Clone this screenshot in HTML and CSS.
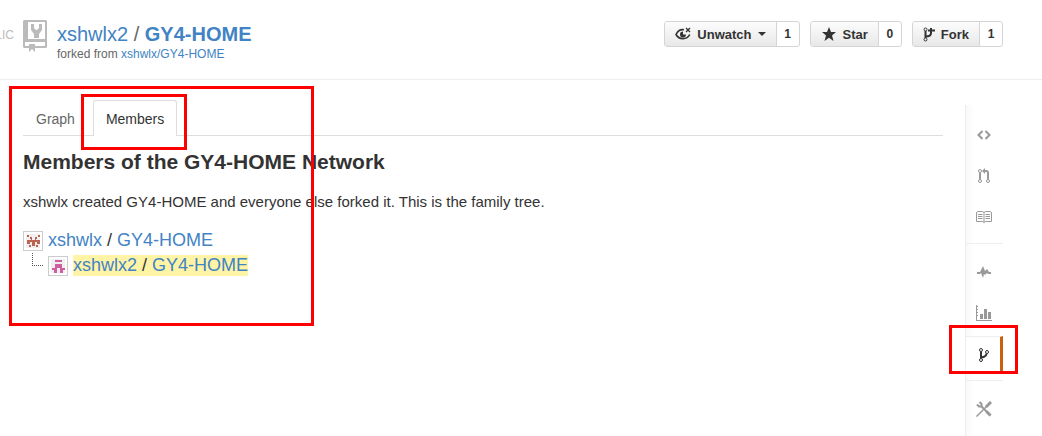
FILE: index.html
```html
<!DOCTYPE html>
<html lang="en">
<head>
    <meta charset="UTF-8">
    <meta name="viewport" content="width=device-width, initial-scale=1.0">
    <title>Members of the GY4-HOME Network</title>
    <link rel="stylesheet" href="styles.css">
</head>
<body>

<header class="repo-header">
    <div class="visibility"><span>PUBLIC</span></div>
    <svg class="repo-icon" width="24" height="32" viewBox="0 0 24 32">
        <path fill="#bbb" fill-rule="evenodd" d="M1 0H23L24 1V27L23 28H12V32L9 29L6 32V28H1L0 27V1ZM5 2V19H22V2ZM2 22V26H6V24H12V26H22V22Z"/>
        <path fill="#bbb" d="M8 4h3v4l2 2h1l2-2V4h3v6l-3 4v4h-5v-4l-3-4z"/>
    </svg>
    <div class="repo-title">
        <h1><a href="#">xshwlx2</a> / <a href="#"><strong>GY4-HOME</strong></a></h1>
        <p>forked from <a href="#">xshwlx/GY4-HOME</a></p>
    </div>
    <div class="actions">
        <div class="action">
            <button type="button">
                <svg width="16" height="14" viewBox="0 0 16 14" fill="none" stroke="#333">
                    <path stroke-width="1.6" d="M9 2.800C5 2 2.500 4.500 1 7.500C4 13 12 13 14.800 7.500"/>
                    <path stroke-width="1.300" d="M11 1l4 4M15 1l-4 4"/>
                    <path fill="#333" stroke="none" d="M8 4.500a3 3 0 1 0 3 3H8z"/>
                </svg>
                Unwatch
                <span class="caret"></span>
            </button>
            <a class="count" href="#">1</a>
        </div>
        <div class="action">
            <button type="button">
                <svg width="16" height="14" viewBox="0 0 16 14">
                    <path fill="#333" d="M8 0l2 5h5l-4 3.500L12.500 14L8 10.700L3.500 14L5 8.500L1 5h5z"/>
                </svg>
                Star
            </button>
            <a class="count" href="#">0</a>
        </div>
        <div class="action">
            <button type="button">
                <svg width="12" height="15" viewBox="0 0 12 15" fill="none" stroke="#333">
                    <circle cx="2.500" cy="2.500" r="1.500"/>
                    <circle cx="2.500" cy="12.500" r="1.500"/>
                    <path stroke-width="2" d="M2.500 4v7M2.500 9.500C6 9.500 8 9 8 6V1M5 3.500h7"/>
                </svg>
                Fork
            </button>
            <a class="count" href="#">1</a>
        </div>
    </div>
</header>

<div class="page">
    <main class="content">
        <nav class="tabs">
            <a class="tab" href="#">Graph</a>
            <a class="tab selected" href="#">Members<span class="mark mark-tab"></span></a>
        </nav>
        <h2>Members of the GY4-HOME Network</h2>
        <p>xshwlx created GY4-HOME and everyone else forked it. This is the family tree.</p>
        <div class="network">
            <div class="member">
                <svg class="avatar" width="20" height="20" viewBox="1 1 18 18">
                    <path fill="#bd6450" d="M4 4h2v2h-2zM15 4h2v2h-2zM7 6h2v2h-2zM12 6h2v2h-2zM4 9h4v-1h1v1h3v-1h1v1h4v4h-3v-2h-2v2h-3v-2h-2v2h-3zM6 14h2v2h-2zM9 13h3v2h-3zM13 14h2v2h-2z"/>
                </svg>
                <span><a href="#">xshwlx</a> / <a href="#">GY4-HOME</a></span>
            </div>
            <div class="member">
                <span class="branch"></span>
                <svg class="avatar" width="20" height="20" viewBox="1 1 18 18">
                    <path fill="#d05f9f" d="M7 4h7v2h-7zM7 8h7v4h3v2h-2v3h-3v-5h-3v5h-3v-3h-2v-2h3z"/>
                </svg>
                <span class="current"><a href="#">xshwlx2</a> / <a href="#">GY4-HOME</a></span>
            </div>
        </div>
        <span class="mark mark-content"></span>
    </main>

    <nav class="sidebar">
        <div class="group">
            <a href="#" aria-label="Code">
                <svg width="16" height="16" viewBox="0 0 16 16" fill="none" stroke="#999" stroke-width="2">
                    <path d="M6.500 4L2.500 8l4 4M9.500 4l4 4l-4 4"/>
                </svg>
            </a>
            <a href="#" aria-label="Pull Requests">
                <svg width="16" height="16" viewBox="0 0 16 16" fill="none" stroke="#999">
                    <circle cx="4" cy="3" r="1.500"/><circle cx="4" cy="13" r="1.500"/><circle cx="12" cy="13" r="1.500"/>
                    <path stroke-width="2" d="M4 4.500v7M12 11.500V5Q12 3 10 3H7"/>
                    <path fill="#999" stroke="none" d="M9 0v6L6 3z"/>
                </svg>
            </a>
            <a href="#" aria-label="Wiki">
                <svg width="16" height="16" viewBox="0 0 16 16" fill="none" stroke="#999">
                    <path d="M.5 3.500L2 2.500h4.500L8 3.500l1.500-1H14l1.500 1v9H9.500L8 13.500L6.500 12.500h-6zM8 3.500v10"/>
                    <path d="M2 5.500h4.500M2 7.500h4.500M2 9.500h4.500M9.500 5.500H14M9.500 7.500H14M9.500 9.500H14"/>
                </svg>
            </a>
        </div>
        <div class="group">
            <a href="#" aria-label="Pulse">
                <svg width="16" height="16" viewBox="0 0 16 16" fill="#999">
                    <path d="M1 8h3l3-6l2 5l2-2l2 3h2v2h-3l-1-1l-2 2l-1-1l-1 4l-2-5l-1 1H1z"/>
                </svg>
            </a>
            <a href="#" aria-label="Graphs">
                <svg width="16" height="16" viewBox="0 0 16 16" fill="#999">
                    <path d="M0 0h1v15h15v1H0zM1 1h1v1H1zM1 4h1v1H1zM1 7h1v1H1zM1 10h1v1H1zM4 9h3v5H4zM8 4h3v10H8zM12 7h3v7h-3z"/>
                </svg>
            </a>
            <a class="selected" href="#" aria-label="Network">
                <svg width="16" height="16" viewBox="0 0 16 16" fill="none" stroke="#333">
                    <circle cx="5" cy="3" r="1.500"/><circle cx="5" cy="13" r="1.500"/><circle cx="11" cy="5" r="1.500"/>
                    <path stroke-width="2" d="M5 4.500v7M5 10.500C9 10 10.500 9 10.500 6.500"/>
                </svg>
                <span class="mark mark-side"></span>
            </a>
        </div>
        <div class="group">
            <a href="#" aria-label="Settings">
                <svg width="16" height="16" viewBox="0 0 16 16" fill="none" stroke="#999">
                    <path stroke-width="2" d="M5 5l9.500 9.500"/>
                    <path stroke-width="3" d="M10.500 10.500l4 4"/>
                    <path stroke-width="2" d="M1 3.500L3 5.500H5.500V3L3.500 1"/>
                    <path stroke-width="1.500" d="M.5 15.500L11 5"/>
                    <path stroke-width="3" d="M10 6l5-5"/>
                </svg>
            </a>
        </div>
    </nav>
</div>

</body>
</html>
```
FILE: styles.css
```css
* {
    box-sizing: border-box;
}
body {
    margin: 0;
    min-height: 100vh;
    display: flex;
    flex-direction: column;
    overflow: hidden;
    background-color: white;
    color: #333;
    font-family: "Liberation Sans", Arial, sans-serif;
    font-size: 15px;
}
a {
    color: #4183c4;
    text-decoration: none;
}
h1, h2, p {
    margin: 0;
}

/* header */
.repo-header {
    display: flex;
    align-items: flex-start;
    padding: 20px 39px 18px 0;
    border-bottom: 1px solid #eee;
}
.visibility {
    display: flex;
    justify-content: flex-end;
    width: 14px;
    margin-right: 9px;
    overflow: hidden;
    color: #bbb;
    font-size: 12px;
    line-height: 30px;
}
.repo-icon {
    margin-right: 10px;
}
.repo-title {
    flex: 1;
}
.repo-title h1 {
    color: #666;
    font-size: 20px;
    font-weight: normal;
    line-height: 28px;
}
.repo-title p {
    color: #666;
    font-size: 12px;
    line-height: 13px;
}
.actions {
    display: flex;
    gap: 10px;
    padding-top: 1px;
}
.action {
    display: flex;
    height: 26px;
    border: 1px solid #d5d5d5;
    border-radius: 3px;
    font-size: 13px;
    font-weight: bold;
}
.action button {
    display: flex;
    align-items: center;
    gap: 6px;
    padding: 0 10px;
    border: none;
    border-right: 1px solid #d5d5d5;
    border-radius: 2px 0 0 2px;
    background: linear-gradient(#fcfcfc, #e8e8e8);
    color: #333;
    font: inherit;
    cursor: pointer;
}
.caret {
    border: 4px solid transparent;
    border-top-color: #333;
    border-bottom: 0;
}
.count {
    width: 22px;
    color: #333;
    font-size: 12px;
    line-height: 24px;
    text-align: center;
}

/* page */
.page {
    flex: 1;
    display: flex;
    gap: 22px;
    padding: 20px 39px 0 23px;
}
.content {
    flex: 1;
    position: relative;
}
.tabs {
    display: flex;
    gap: 5px;
    height: 36px;
    border-bottom: 1px solid #ddd;
}
.tab {
    position: relative;
    padding: 0 12px;
    border: 1px solid transparent;
    color: #666;
    font-size: 14px;
    line-height: 36px;
}
.tab.selected {
    height: 36px;
    border-color: #ddd;
    border-bottom: none;
    border-radius: 3px 3px 0 0;
    background-color: white;
    color: #333;
}
.content h2 {
    margin-top: 14px;
    font-size: 21px;
    line-height: 24px;
}
.content p {
    margin-top: 18px;
    line-height: 20px;
}
.network {
    margin-top: 16px;
    font-size: 18px;
    line-height: 21px;
}
.member {
    display: flex;
    align-items: center;
    gap: 5px;
    height: 25px;
}
.avatar {
    border: 1px solid #ccc;
    background-color: #f0f0f0;
    box-shadow: inset 0 0 0 2px white;
}
.branch {
    width: 11px;
    height: 13px;
    margin: 0 0 12px 9px;
    border: 1px dotted #555;
    border-width: 0 0 1px 1px;
}
.current {
    background-color: #fff3a6;
}

/* sidebar */
.sidebar {
    width: 38px;
    margin-top: 5px;
    border-left: 1px solid #eee;
    background: linear-gradient(to right, #f9f9f9, white 8px);
}
.group {
    padding: 9px 0 6px;
    border-bottom: 1px solid #eee;
}
.group + .group {
    padding: 7px 0 6px;
}
.group:last-child {
    border-bottom: none;
}
.group a {
    position: relative;
    display: flex;
    align-items: center;
    justify-content: center;
    height: 41px;
    padding-right: 2px;
}
.group a.selected {
    height: 38px;
    margin-top: 3px;
    padding: 0 0 2px 1px;
    border-top: 1px solid #eee;
    border-right: 3px solid #c9610f;
    background-color: white;
}

/* red marks */
.mark {
    position: absolute;
    border: 3px solid #f00;
    pointer-events: none;
}
.mark-content {
    top: -14px;
    left: -14px;
    width: 305px;
    height: 240px;
}
.mark-tab {
    top: -7px;
    left: -13px;
    right: -11px;
    height: 56px;
}
.mark-side {
    top: -12px;
    left: -17px;
    right: -18px;
    height: 49px;
}
```
